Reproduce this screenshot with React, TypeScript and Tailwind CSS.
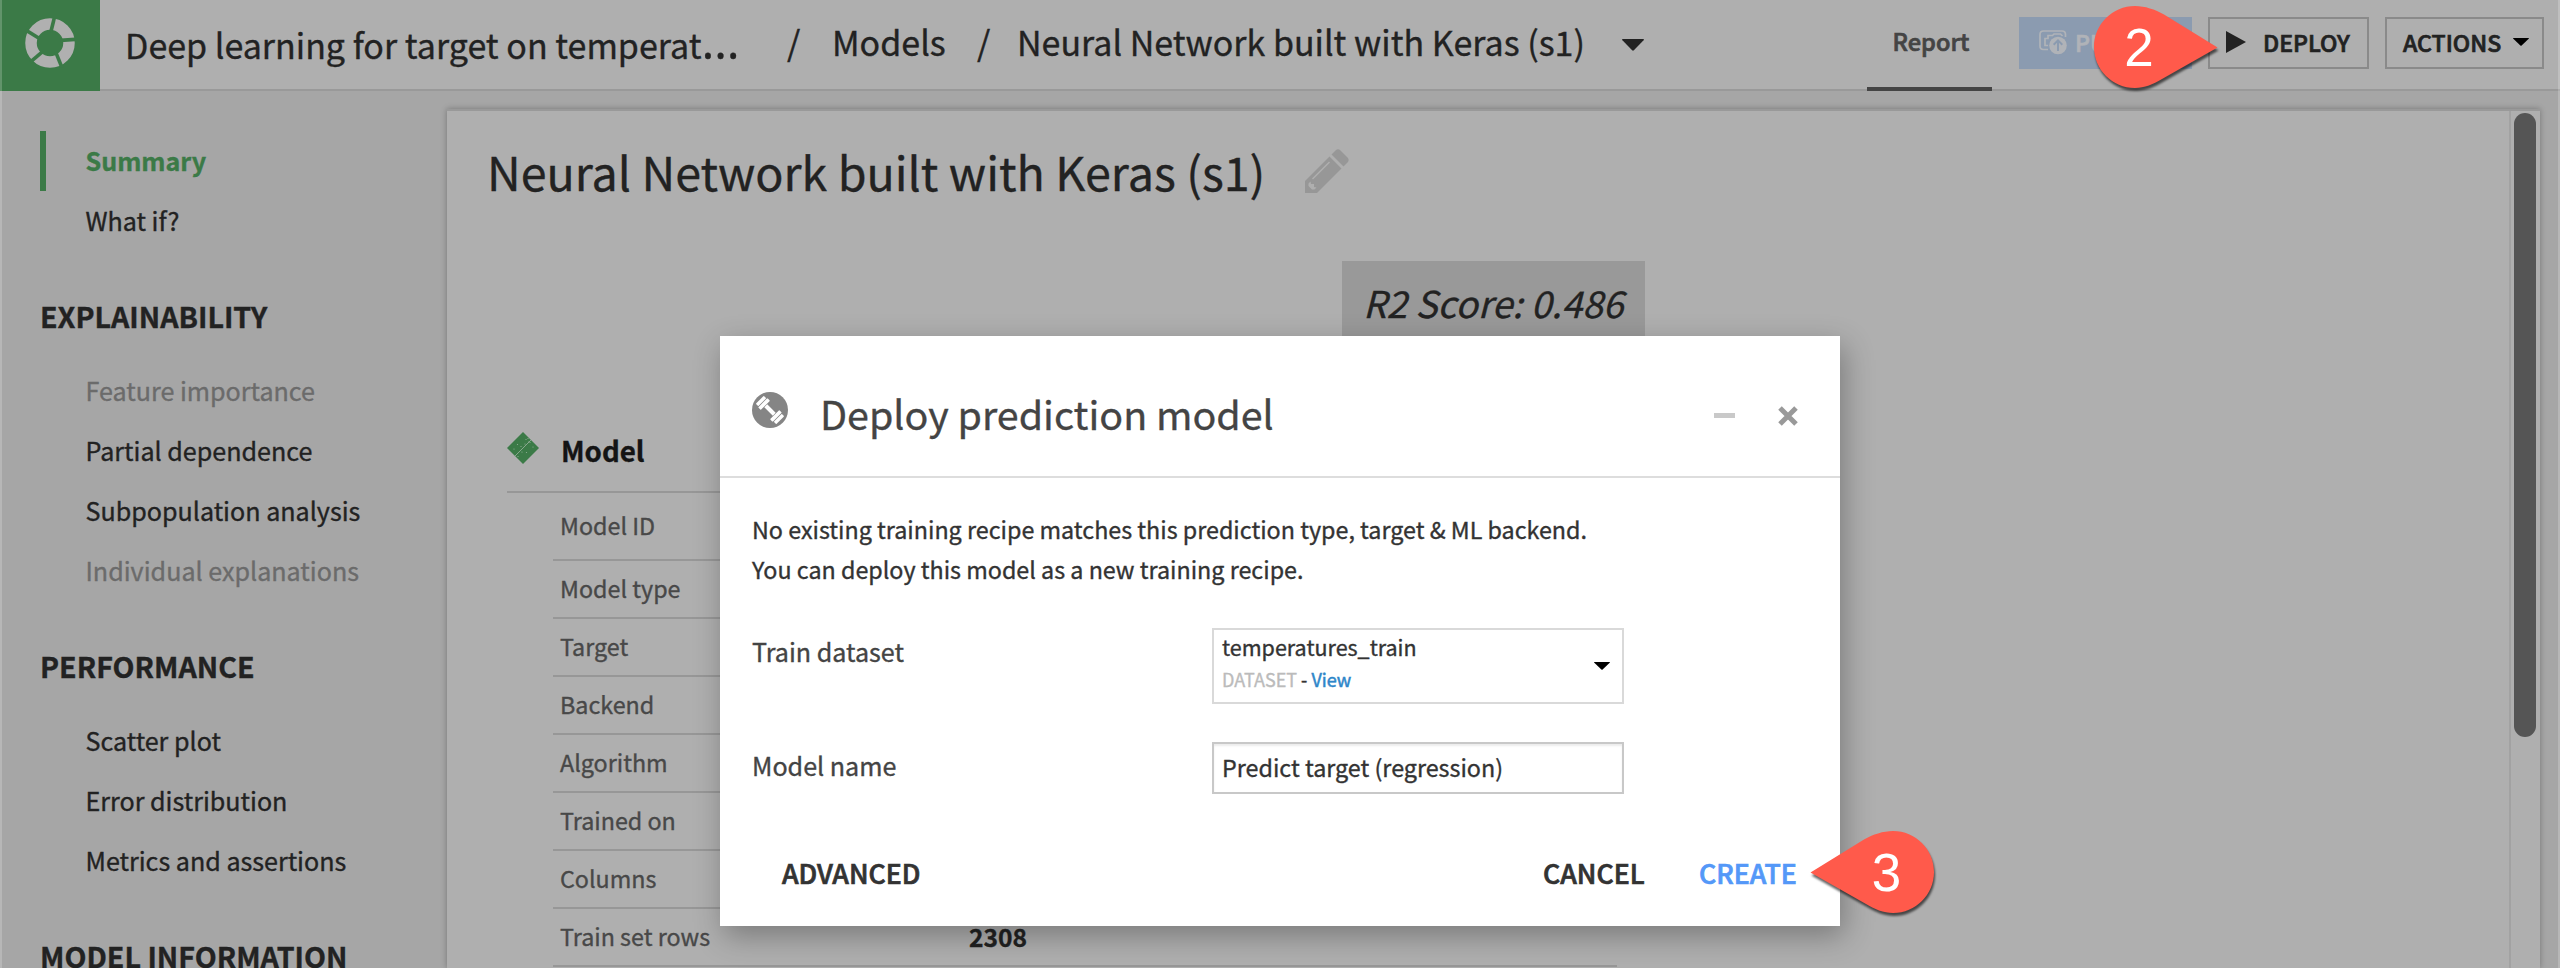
import type { ReactNode } from "react";
import clsx from "clsx";

interface NavItem {
    label: string;
    active?: boolean;
    disabled?: boolean;
}

interface NavSection {
    title?: string;
    items: NavItem[];
}

const sections: NavSection[] = [
    { items: [{ label: "Summary", active: true }, { label: "What if?" }] },
    {
        title: "EXPLAINABILITY",
        items: [
            { label: "Feature importance", disabled: true },
            { label: "Partial dependence" },
            { label: "Subpopulation analysis" },
            { label: "Individual explanations", disabled: true },
        ],
    },
    {
        title: "PERFORMANCE",
        items: [{ label: "Scatter plot" }, { label: "Error distribution" }, { label: "Metrics and assertions" }],
    },
    { title: "MODEL INFORMATION", items: [] },
];

const modelRows = [
    { label: "Model ID", value: "" },
    { label: "Model type", value: "" },
    { label: "Target", value: "" },
    { label: "Backend", value: "" },
    { label: "Algorithm", value: "" },
    { label: "Trained on", value: "" },
    { label: "Columns", value: "" },
    { label: "Train set rows", value: "2308" },
];

// Ring split in five slanted segments
function Logo() {
    return (
        <svg viewBox="-25 -25 50 50" className="h-[50px] w-[50px]">
            <circle r="19" fill="none" stroke="#b0b0b0" strokeWidth="11.5" />
            {[0, 72, 144, 216, 288].map((a) => (
                <path key={a} d="M0.8 -11 L4.8 -27" stroke="#3b7a47" strokeWidth="3.6" transform={`rotate(${a})`} />
            ))}
        </svg>
    );
}

function Caret({ className }: { className: string }) {
    return (
        <svg viewBox="0 0 20 11" preserveAspectRatio="none" className={className}>
            <path d="M0.6 0H19.4Q20.4 0.3 19.6 1.2L10.8 10.4Q10 11.2 9.2 10.4L0.4 1.2Q-0.4 0.3 0.6 0Z" fill="currentColor" />
        </svg>
    );
}

function PublishIcon() {
    return (
        <svg viewBox="0 0 29 25" className="h-[25px] w-[29px]" fill="none" stroke="currentColor" strokeWidth="1.7">
            <path d="M9 19.5H4.5Q1 19.5 1 16V4.5Q1 1 4.5 1H23Q26.5 1 26.5 4.5V7" />
            <path d="M9.500 15.500H6V8.500H9V5.500H13.500L15 4H21.500L23.500 6" />
            <circle cx="19" cy="15.500" r="9.800" fill="#8b9bb0" stroke="none" />
            <circle cx="19" cy="15.500" r="8.800" fill="currentColor" stroke="none" />
            <path d="M19 21V10.5M14.700 14.7L19 10.4L23.300 14.7" stroke="#8b9bb0" strokeWidth="2" />
        </svg>
    );
}

function PencilIcon() {
    return (
        <svg viewBox="0 0 44 44" className="h-11 w-11 text-[#979797]">
            <path
                fill="currentColor"
                fillRule="evenodd"
                d="M0 32L24.5 7.5L36.5 19.5L12 44H0ZM3.5 34.5V37L7 40.5H9.5L11.5 38.5L9 38V35H6L5.5 32.5ZM8 30.5L25 13.5L24 12.5L7 29.5Z"
            />
            <path fill="currentColor" d="M26.5 5.5L30.5 1.5Q33 -0.8 35.5 1.5L42.5 8.5Q44.8 11 42.5 13.5L38.5 17.5Z" />
        </svg>
    );
}

function DiamondIcon() {
    const dots = [
        [7, 17], [10.5, 12.5], [14, 14.5], [19, 7.5], [21.5, 10], [18, 12], [11, 24.5], [15, 20], [19.5, 20.5], [26, 15], [23, 10.5], [21, 6.5],
    ];
    return (
        <svg viewBox="0 0 32 32" className="h-8 w-8">
            <path d="M16 0L32 16L16 32L0 16Z" fill="#3b7a47" />
            <path d="M8 24L24 8" stroke="#9db3a1" strokeWidth="0.8" />
            {dots.map(([x, y], i) => (
                <circle key={i} cx={x} cy={y} r="0.6" fill="#93b098" />
            ))}
        </svg>
    );
}

function DumbbellIcon() {
    return (
        <svg viewBox="-18 -18 36 36" className="h-9 w-9">
            <circle r="18" fill="#858585" />
            <g transform="rotate(45)" fill="#fff">
                <rect x="-6" y="-2" width="12" height="4" />
                <rect x="-10.2" y="-6.5" width="3.6" height="13" rx="0.6" />
                <rect x="-14.4" y="-5.6" width="3.4" height="11.2" rx="0.6" />
                <rect x="6.6" y="-6.5" width="3.6" height="13" rx="0.6" />
                <rect x="11" y="-5.6" width="3.4" height="11.2" rx="0.6" />
            </g>
        </svg>
    );
}

// Numbered callout, drawn pointing right; flip to point left
function Pin({ n, flip, className }: { n: number; flip?: boolean; className: string }) {
    return (
        <svg viewBox="0 0 124 82" className={clsx("absolute z-20 h-[82px] w-[124px] overflow-visible drop-shadow-[1px_3px_1px_rgba(0,0,0,0.6)]", className)}>
            <path
                d="M41 0C18.4 0 0 18.4 0 41S18.4 82 41 82C50 82 60 78 68 73L123.5 41.5L70 8.5C61 3.5 51 0 41 0Z"
                fill="#ff5a4b"
                transform={flip ? "translate(124 0) scale(-1 1)" : undefined}
            />
            <text x={flip ? 76.5 : 45} y="60" textAnchor="middle" fill="#fff" className="font-[Liberation_Sans,sans-serif] text-[53px] [-webkit-text-stroke:0.6px_#fff]">
                {n}
            </text>
        </svg>
    );
}

function HeaderButton({ children, className }: { children: ReactNode; className: string }) {
    return (
        <button
            className={clsx(
                "flex h-[52px] items-center pb-[2px] text-[23.1px] font-medium whitespace-nowrap [-webkit-text-stroke:0.7px]",
                className
            )}
        >
            {children}
        </button>
    );
}

function Header() {
    return (
        <header className="flex h-[91px] shrink-0 border-b-2 border-[#999] bg-[#afafaf]">
            <div className="-mb-[2px] flex w-[100px] items-center justify-center bg-[#3b7a47] pb-[5px]">
                <Logo />
            </div>
            <div className="flex flex-1 items-center pr-4 pb-[3px] pl-[25px]">
                <div className="flex items-center pb-[2px] text-[34px] leading-10 whitespace-nowrap">
                    <span className="w-[662px]">
                        Deep learning for target on temperat<span className="font-[Open_Sans,sans-serif] text-[49px]">…</span>
                    </span>
                    <span className="w-[45px]">/</span>
                    <span className="w-[145px]">Models</span>
                    <span className="w-[40px]">/</span>
                    <span className="w-[605px]">Neural Network built with Keras (s1)</span>
                    <Caret className="mt-[6px] h-[12px] w-[22px]" />
                </div>
                <div className="-mb-[5px] ml-auto flex h-[91px] w-[125px] items-center justify-center border-b-4 border-[#444] pb-[3px] pl-[3px] text-[23.6px] font-medium text-[#444] [-webkit-text-stroke:0.7px]">
                    Report
                </div>
                <HeaderButton className="ml-[27px] w-[173px] bg-[#8b9bb0] pl-5 text-[#b0b3b8]">
                    <PublishIcon />
                    <span className="ml-[7px]">PUBLISH</span>
                </HeaderButton>
                <HeaderButton className="ml-4 w-[161px] border-2 border-[#8a8a8a] pl-4">
                    <svg viewBox="0 0 20 22" className="h-[22px] w-5">
                        <path d="M0 0L20 11L0 22Z" fill="currentColor" />
                    </svg>
                    <span className="ml-[17px]">DEPLOY</span>
                </HeaderButton>
                <HeaderButton className="ml-4 w-[159px] border-2 border-[#8a8a8a] pl-4">
                    ACTIONS
                    <Caret className="ml-[12px] h-[8px] w-4 text-black" />
                </HeaderButton>
            </div>
        </header>
    );
}

function Sidebar() {
    return (
        <nav className="h-full w-[447px] shrink-0 pt-10 pl-10 whitespace-nowrap">
            {sections.map((section, i) => (
                <div key={i}>
                    {section.title && (
                        <h3 className="h-[110px] pt-[19px] text-[28.6px] leading-[91px] font-bold">{section.title}</h3>
                    )}
                    {section.items.map((item) => (
                        <div
                            key={item.label}
                            className={clsx(
                                "h-[60px] border-l-[6px] pl-[39.5px] text-[25.1px] leading-[58px]",
                                item.active ? "border-[#3b7a47] font-bold text-[#3b7a47]" : "border-transparent",
                                item.disabled && "text-[#6b6b6b]"
                            )}
                        >
                            {item.label}
                        </div>
                    ))}
                </div>
            ))}
        </nav>
    );
}

function Report() {
    return (
        <main className="mt-[18px] mr-5 flex flex-1 border-t-2 border-[#999] bg-[#afafaf] shadow-[0_0_6px_rgba(0,0,0,0.3)]">
            <div className="flex-1">
                <div className="flex items-center pt-[30px] pl-10">
                    <h1 className="w-[818px] text-[46.6px] leading-[60px] whitespace-nowrap">Neural Network built with Keras (s1)</h1>
                    <PencilIcon />
                </div>
                <div className="mt-[60px] ml-[895px] h-[140px] w-[303px] bg-[#999] pt-[13px] pl-[21px] text-[37px] leading-[56px] whitespace-nowrap italic">
                    R2 Score: 0.486
                </div>
                <section className="ml-[60px] w-[1110px]">
                    <div className="flex h-[92px] items-center border-b-2 border-[#979797] pt-1">
                        <DiamondIcon />
                        <h2 className="mt-[3px] ml-[22px] text-[27.7px] leading-9 font-bold text-[#141414]">Model</h2>
                    </div>
                    <div className="ml-[46px]">
                        {modelRows.map((row, i) => (
                            <div
                                key={row.label}
                                className={clsx(
                                    "flex items-center border-b-2 border-[#979797] pb-[2px] pl-[7px] text-[23.3px] whitespace-nowrap",
                                    i === 0 ? "h-[68px]" : "h-[58px]"
                                )}
                            >
                                <span className="w-[409px] text-[#484848]">{row.label}</span>
                                <span className="text-[24.6px] font-bold">{row.value}</span>
                            </div>
                        ))}
                    </div>
                </section>
            </div>
            <div className="w-[31px] border-l-2 border-[#a2a2a2] pt-[2px] pl-[3px]">
                <div className="h-[624px] w-[22px] rounded-full bg-[#555]" />
            </div>
        </main>
    );
}

function DeployModal() {
    return (
        <div className="absolute top-[336px] left-[720px] z-10 flex h-[590px] w-[1120px] flex-col bg-white text-[#333] shadow-[4px_10px_28px_rgba(0,0,0,0.3)]">
            <div className="flex h-[142px] shrink-0 items-center border-b-2 border-[#ddd] pl-8">
                <div className="pt-[8px]">
                    <DumbbellIcon />
                </div>
                <h2 className="ml-8 pt-[13px] text-[39.4px] leading-[52px] whitespace-nowrap text-[#444]">Deploy prediction model</h2>
                <div className="mt-[19px] mr-[42px] ml-auto flex items-center gap-[43px]">
                    <div className="h-[5px] w-[21px] bg-[#c9c9c9]" />
                    <svg viewBox="0 0 20 20" className="h-5 w-5">
                        <path d="M2 2L18 18M18 2L2 18" stroke="#999" strokeWidth="5" />
                    </svg>
                </div>
            </div>
            <div className="px-8 pt-[31px]">
                <p className="text-[23.3px] leading-10 whitespace-nowrap">
                    No existing training recipe matches this prediction type, target & ML backend.
                    <br />
                    You can deploy this model as a new training recipe.
                </p>
                <div className="mt-[39px] flex">
                    <label className="w-[460px] pt-[3px] text-[25.1px] leading-10 text-[#444]">Train dataset</label>
                    <div className="flex h-[76px] w-[412px] items-center justify-between border-2 border-[#d9d9d9] pr-3 pl-2">
                        <div className="pb-[5px]">
                            <div className="text-[21.5px] leading-8">temperatures_train</div>
                            <div className="text-[18px] leading-[33px]">
                                <span className="text-[#bbb]">DATASET</span> -{" "}
                                <span className="text-[#2e86c9] [-webkit-text-stroke:0.5px]">View</span>
                            </div>
                        </div>
                        <Caret className="h-[8px] w-4 text-black" />
                    </div>
                </div>
                <div className="mt-[38px] flex">
                    <label className="w-[460px] pt-[3px] text-[25.1px] leading-10 text-[#444]">Model name</label>
                    <div className="h-[52px] w-[412px] border-2 border-[#c8c8c8] pl-2 text-[23.3px] leading-[47px] shadow-[inset_0_2px_2px_rgba(0,0,0,0.08)]">
                        Predict target (regression)
                    </div>
                </div>
            </div>
            <div className="mt-[59px] flex pl-[62px] text-[26.7px] leading-10 font-medium [-webkit-text-stroke:0.7px]">
                <button className="w-[761px] text-left">ADVANCED</button>
                <button className="w-[156px] text-left">CANCEL</button>
                <button className="text-[#5498f8]">CREATE</button>
            </div>
        </div>
    );
}

export default function App() {
    return (
        <div className="relative flex h-[968px] w-[2560px] flex-col overflow-hidden bg-[#a6a6a6] font-[Noto_Sans_CJK_SC,sans-serif] text-[#222] [-webkit-text-stroke:0.35px]">
            <Header />
            <div className="flex min-h-0 flex-1">
                <Sidebar />
                <Report />
            </div>
            <div className="pointer-events-none absolute inset-0 border-x-2 border-white/20" />
            <DeployModal />
            <Pin n={2} className="top-[6px] left-[2094px]" />
            <Pin n={3} flip className="top-[831px] left-[1810px]" />
        </div>
    );
}
